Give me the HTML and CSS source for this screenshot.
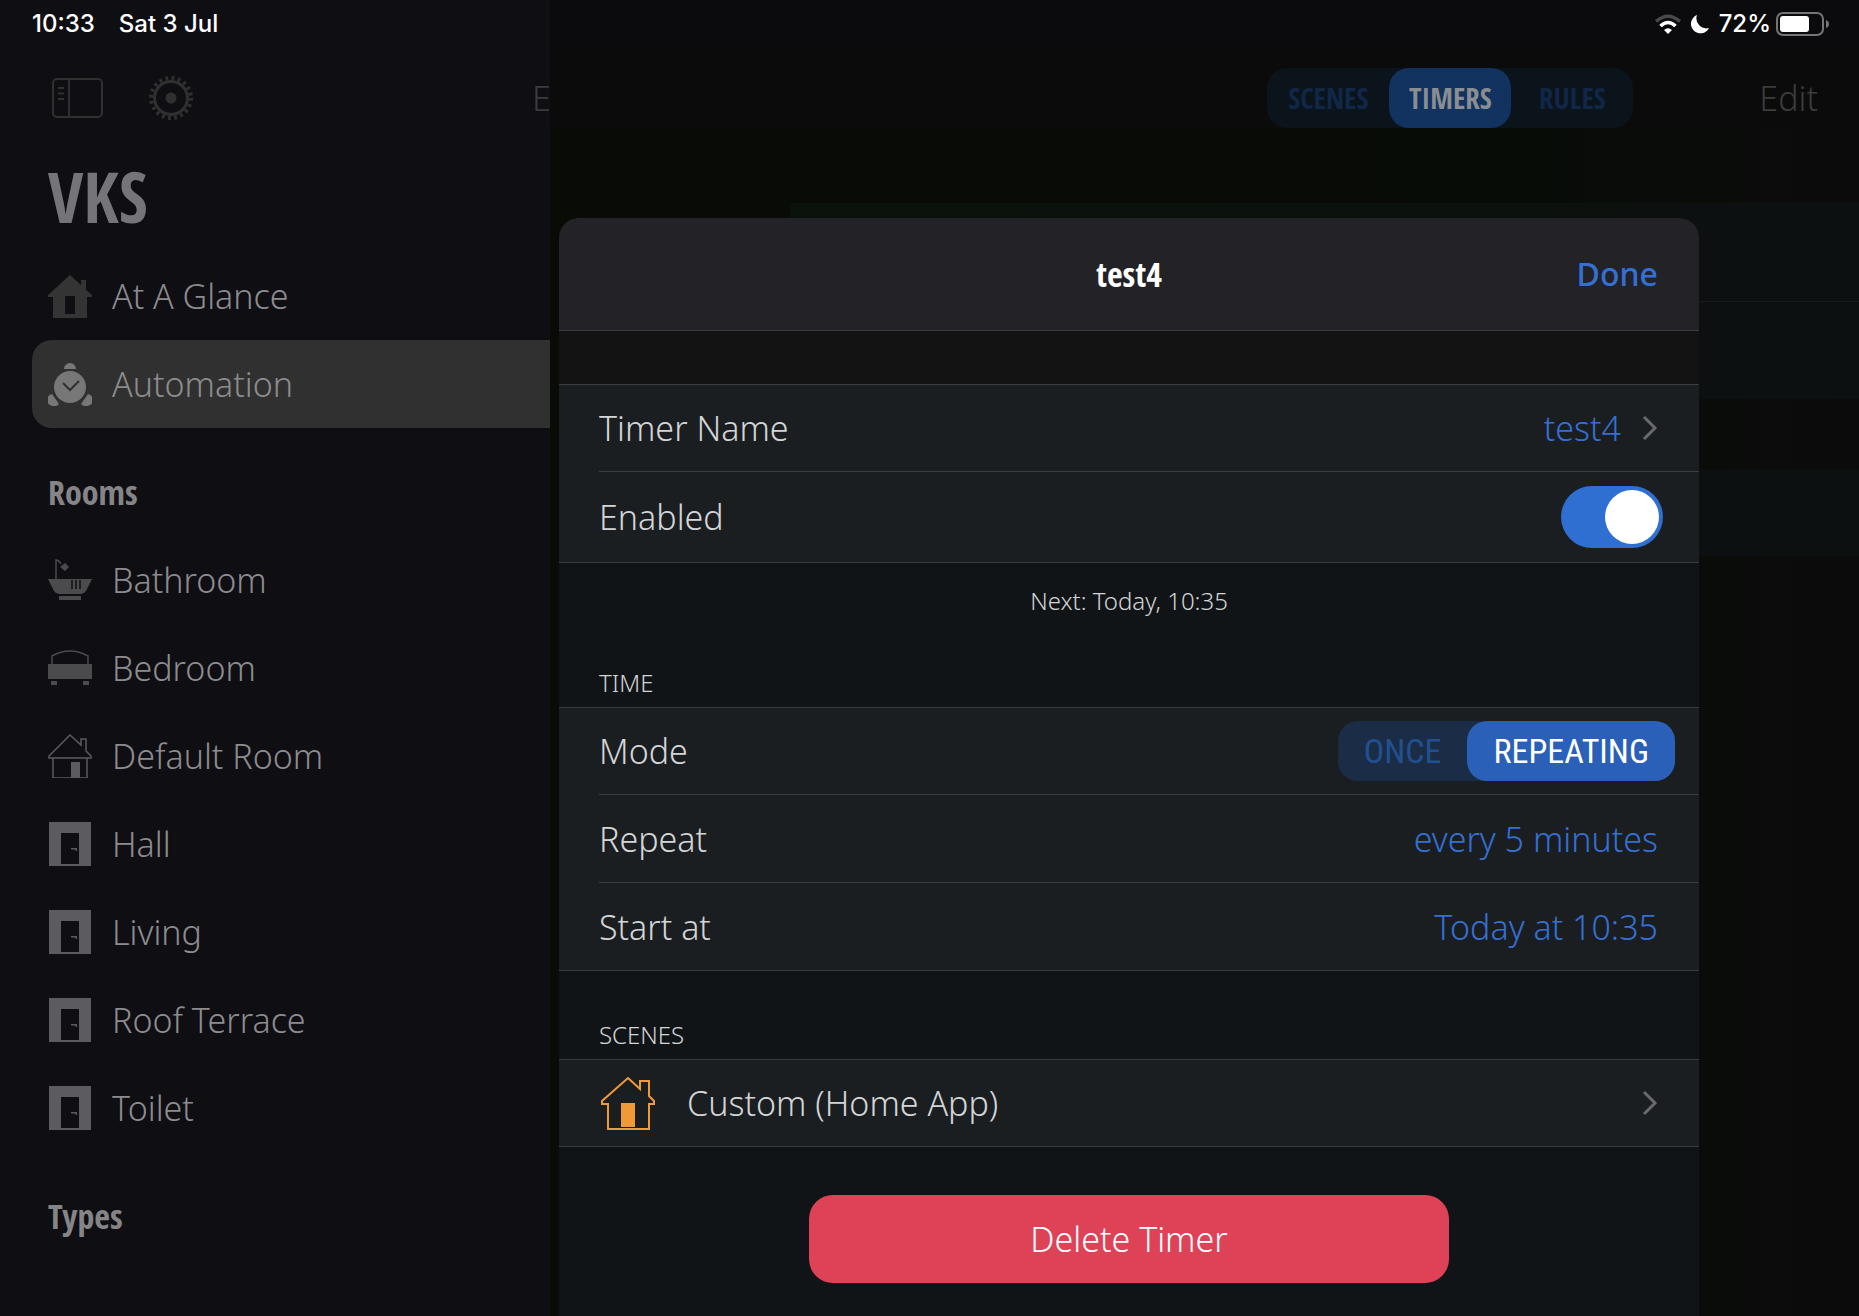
FILE: index.html
```html
<!DOCTYPE html>
<html lang="en">
<head>
<meta charset="utf-8">
<meta name="viewport" content="width=device-width, initial-scale=1">
<title>VKS – Timers</title>
<link rel="stylesheet" href="styles.css">
</head>
<body>
<svg class="defs" aria-hidden="true">
  <symbol id="door" viewBox="0 0 44 44"><path fill="currentColor" fill-rule="evenodd" d="M1 0H43V44H1ZM13 11V42H31V11Z"/><path fill="currentColor" d="M23 26h6v3h-1.500v-1.500H23z"/></symbol>
  <symbol id="chevron" viewBox="0 0 16 26"><path d="M2 2 13 13 2 24" fill="none" stroke="currentColor" stroke-width="3"/></symbol>
</svg>
<div class="app">
  <aside class="sidebar">
    <div class="status status-left"><span>10:33</span><span>Sat 3 Jul</span></div>
    <div class="side-tools">
      <button class="tool" aria-label="Toggle sidebar"><svg width="52" height="40" viewBox="0 0 52 40" fill="none" stroke="currentColor" stroke-width="2"><rect x="1" y="1" width="49" height="38" rx="4"/><path d="M17 1V39M6 10h6M6 15.500h6M6 21h6"/></svg></button>
      <button class="tool" aria-label="Settings"><svg width="46" height="46" viewBox="0 0 46 46" fill="none" stroke="currentColor"><circle cx="23" cy="23" r="16.500" stroke-width="3"/><circle cx="23" cy="23" r="20" stroke-width="4" stroke-dasharray="2.800 3.483"/><circle cx="23" cy="23" r="5.500" fill="currentColor" stroke="none"/></svg></button>
      <button class="tool edit side-edit">Edit</button>
    </div>
    <h1 class="title">VKS</h1>
    <nav>
      <a class="item dark" href="#glance"><svg class="icon" viewBox="0 0 44 44"><path fill="currentColor" fill-rule="evenodd" d="M22 1 33 11V6h5v10l6 5v2h-5V44H5V23H0v-2ZM17 22V40H27V22Z"/></svg>At A Glance</a>
      <a class="item selected" href="#automation" aria-current="page"><svg class="icon" viewBox="0 0 44 44"><g fill="currentColor"><circle cx="22" cy="25" r="16"/><path d="M16 7a6 6 0 0 1 12 0ZM4 32a6 6 0 0 0-2 11q5 3 9-1zM40 32a6 6 0 0 1 2 11q-5 3-9-1z"/></g><path d="m15 21 7 7 9-9" fill="none" stroke="#303030" stroke-width="2"/></svg>Automation</a>
      <h2 class="section">Rooms</h2>
      <a class="item bath" href="#bathroom"><svg class="icon" viewBox="0 0 44 44"><path d="M8 21V2q3 0 5 4" fill="none" stroke="currentColor" stroke-width="1.500"/><path fill="currentColor" d="m12 9 5-4 4 4-4 4zM0 21H44L38 33q-2 3-5 3H11q-3 0-5-3ZM11 38H33v4H11z"/><path d="M24 22v9M28 22v9M32 22v9" stroke="#0f0e13" stroke-width="1.500"/></svg>Bathroom</a>
      <a class="item bath" href="#bedroom"><svg class="icon" viewBox="0 0 44 44"><path d="M4 19V10Q22 0 40 10V19" fill="none" stroke="currentColor" stroke-width="1.500"/><path fill="currentColor" d="M0 18H44V33H0zM3 35h6v4H3zM35 35h6v4h-6z"/></svg>Bedroom</a>
      <a class="item" href="#default"><svg class="icon" viewBox="0 0 44 44"><g fill="none" stroke="currentColor" stroke-width="1.500"><path d="M22 1 33 11V5h5v12l5 5v2H1v-2ZM5 24V44H39V24"/></g><path fill="currentColor" d="M23 28h9v16h-9z"/></svg>Default Room</a>
      <a class="item" href="#hall"><svg class="icon"><use href="#door"/></svg>Hall</a>
      <a class="item" href="#living"><svg class="icon"><use href="#door"/></svg>Living</a>
      <a class="item" href="#roof"><svg class="icon"><use href="#door"/></svg>Roof Terrace</a>
      <a class="item" href="#toilet"><svg class="icon"><use href="#door"/></svg>Toilet</a>
      <h2 class="section">Types</h2>
    </nav>
  </aside>
  <main class="main">
    <div class="status status-right">
      <svg width="26" height="20" viewBox="0 0 26 20" fill="none" stroke="#fff" stroke-width="3.500"><path d="M1 7.500Q13-3 25 7.500" stroke="#48484a"/><path d="M5.500 12Q13 5 20.500 12"/><path d="m13 20-4-4q4-3.500 8 0z" fill="#fff" stroke="none"/></svg>
      <svg width="20" height="20" viewBox="0 0 20 20"><path fill="#fff" d="M7 1A9.500 9.500 0 1 0 19 14 10 10 0 0 1 7 1Z"/></svg>
      <span>72%</span>
      <svg width="54" height="24" viewBox="0 0 54 24"><rect x="1" y="1" width="46" height="22" rx="6" fill="none" stroke="#757575" stroke-width="2"/><rect x="4" y="4" width="29" height="16" rx="3" fill="#fff"/><path d="M50 8q3 1 3 4t-3 4z" fill="#757575"/></svg>
    </div>
    <div class="main-tools">
      <fieldset class="segments top-segments">
        <label><input type="radio" name="view"><span>SCENES</span></label>
        <label><input type="radio" name="view" checked><span>TIMERS</span></label>
        <label><input type="radio" name="view"><span>RULES</span></label>
      </fieldset>
      <button class="tool edit">Edit</button>
    </div>
    <div class="back-list"><div class="back-row tall"></div><div class="back-row tall"></div></div>
    <div class="back-list"><div class="back-row"></div></div>
  </main>
</div>
<div class="overlay">
  <section class="dialog" role="dialog" aria-labelledby="dialog-title">
    <header class="dialog-head"><h2 id="dialog-title">test4</h2><button class="done">Done</button></header>
    <div class="group first">
      <a class="row" href="#name"><span>Timer Name</span><span class="value">test4</span><svg class="chevron"><use href="#chevron"/></svg></a>
      <label class="row switch-row"><span>Enabled</span><input class="switch" type="checkbox" role="switch" checked></label>
    </div>
    <p class="note">Next: Today, 10:35</p>
    <h3 class="group-title">TIME</h3>
    <div class="group">
      <div class="row mode-row"><span>Mode</span>
        <fieldset class="segments mode-segments">
          <label><input type="radio" name="mode"><span>ONCE</span></label>
          <label><input type="radio" name="mode" checked><span>REPEATING</span></label>
        </fieldset>
      </div>
      <a class="row" href="#repeat"><span>Repeat</span><span class="value">every 5 minutes</span></a>
      <a class="row" href="#start"><span>Start at</span><span class="value">Today at 10:35</span></a>
    </div>
    <h3 class="group-title scenes-title">SCENES</h3>
    <div class="group">
      <a class="row scene-row" href="#scene"><svg class="scene-icon" viewBox="0 0 54 54"><path d="M27 2 39 13V5h9v15l5 5v3h-5V53H7V28H1v-3Z" fill="none" stroke="currentColor" stroke-width="2"/><path fill="currentColor" d="M20 27H34V51H20z"/></svg><span>Custom (Home App)</span><svg class="chevron"><use href="#chevron"/></svg></a>
    </div>
    <button class="delete">Delete Timer</button>
  </section>
</div>
</body>
</html>
```
FILE: styles.css
```css
*, *::before, *::after { box-sizing: border-box; }

body {
  margin: 0;
  background: #0b0b0c;
  color: #8a8a8c;
  font: 350 34px/44px "Noto Sans", "Open Sans", sans-serif;
  position: relative;
}

h1, h2, h3, p { margin: 0; }
a { color: inherit; text-decoration: none; }
button { font: inherit; border: 0; padding: 0; cursor: pointer; }
.defs { position: absolute; width: 0; height: 0; }

.app { display: flex; min-height: 100vh; }

/* Sidebar */
.sidebar {
  flex: 0 0 550px;
  overflow: hidden;
  background: #0f0e13;
  padding-left: 32px;
}

.status {
  display: flex;
  align-items: center;
  height: 48px;
  color: #fff;
  font: 500 24px/48px Inter, sans-serif;
}
.status-left { gap: 24px; }

.side-tools {
  display: flex;
  align-items: center;
  height: 100px;
  padding-left: 20px;
  gap: 44px;
}
.tool { display: flex; flex: none; background: none; color: #303030; }
.edit { color: #3c3c3e; }
.side-edit { margin-left: 294px; }

.title {
  padding: 16px 0 24px 16px;
  color: #75747a;
  font: bold 70px/64px "Open Sans Condensed", "Noto Sans Condensed", "Liberation Sans Narrow", sans-serif;
}

.item {
  display: flex;
  align-items: center;
  gap: 20px;
  height: 88px;
  padding-left: 16px;
  color: #8c8c8e;
}
.selected { background: #303030; border-radius: 20px 0 0 20px; }
.icon { flex: none; width: 44px; height: 44px; color: #5c5b60; }
.dark .icon { color: #343435; }
.bath .icon { color: #4b4b4d; }
.selected .icon { color: #777; }

.section {
  height: 108px;
  padding: 44px 0 0 16px;
  color: #858587;
  font: bold 34px/40px "Open Sans Condensed", "Noto Sans Condensed", "Liberation Sans Narrow", sans-serif;
}

/* Screen behind the dialog */
.main {
  flex: 1;
  min-width: 0;
  background: linear-gradient(90deg, #090b06 0, #080c07 75%, #0a0c0a 90%, #0c0b0c 100%);
}
.status-right {
  justify-content: flex-end;
  gap: 9px;
  padding-right: 29px;
  background: #0b0b0d;
}
.status-right svg { flex: none; }
.status-right span { margin-right: -4px; }

.main-tools {
  display: flex;
  align-items: center;
  justify-content: flex-end;
  gap: 126px;
  height: 80px;
  padding: 20px 41px 0 0;
  background: #0b0b0c;
  margin-bottom: 75px;
}

.segments {
  display: flex;
  height: 60px;
  margin: 0;
  padding: 0;
  border: 0;
  border-radius: 20px;
}
.segments label { display: flex; }
.segments input { appearance: none; width: 0; height: 0; margin: 0; }
.segments span {
  display: flex;
  align-items: center;
  justify-content: center;
  height: 60px;
  border-radius: 20px;
}
.top-segments {
  background: #0b141b;
  color: #102748;
  font: bold 29px/40px "Open Sans Condensed", "Noto Sans Condensed", "Liberation Sans Narrow", sans-serif;
}
.top-segments span { min-width: 122px; padding: 0 16px; }
.top-segments input:checked + span { background: #12325f; color: #898e92; }

.back-list { margin: 0 0 70px 240px; }
.back-row { height: 87px; background: linear-gradient(90deg, #0b110b 0, #0b110c 70%, #0c1010 85%, #0d1011 100%); }
.back-row.tall { height: 98px; }
.back-row + .back-row { border-top: 1px solid #171a1a; }

/* Dialog */
.overlay {
  position: absolute;
  inset: 0;
  padding: 218px 160px 0 559px;
}
.dialog {
  min-height: 100%;
  overflow: hidden;
  border-radius: 20px 20px 0 0;
  background: #111416;
  color: #d3d5d7;
}
.dialog-head {
  display: grid;
  grid-template-columns: 1fr auto 1fr;
  align-items: center;
  height: 113px;
  padding: 0 41px;
  background: #232226;
  border-bottom: 1px solid #3d3e41;
}
.dialog-head h2 {
  grid-column: 2;
  color: #fff;
  font: bold 34px/44px "Open Sans Condensed", "Noto Sans Condensed", "Liberation Sans Narrow", sans-serif;
}
.done { justify-self: end; background: none; color: #3470d4; font-size: 32px; font-weight: 500; }

.group { border: 1px solid #393c3f; border-width: 1px 0; background: #1b1e21; }
.first { box-shadow: 0 -53px #131313; margin-top: 53px; }
.row {
  display: flex;
  align-items: center;
  height: 88px;
  margin-left: 40px;
  padding-right: 41px;
}
.row:first-child { height: 86px; }
.row > span:first-of-type { margin-right: auto; }
.row + .row { border-top: 1px solid #393c3f; }
.value { color: #3470d4; }
.chevron { flex: none; width: 16px; height: 26px; color: #69696c; }
.value + .chevron { margin-left: 21px; }

.row.switch-row { height: 91px; padding-right: 36px; }
.switch {
  appearance: none;
  width: 102px;
  height: 62px;
  margin: 0;
  padding: 4px;
  border-radius: 31px;
  background: #2f6fd2;
  display: flex;
  justify-content: flex-end;
}
.switch::before { content: ""; width: 54px; height: 54px; border-radius: 50%; background: #fff; }
.switch:not(:checked) { background: #39393d; justify-content: flex-start; }

.note {
  padding: 22px 0 26px;
  font-size: 24px;
  line-height: 32px;
  text-align: center;
}
.group-title {
  padding: 24px 40px 8px;
  font-size: 24px;
  font-weight: 350;
  line-height: 32px;
}
.group-title.scenes-title { padding-top: 48px; }

.row.mode-row { padding-right: 24px; }
.mode-segments {
  background: #1b2d46;
  color: #21508f;
  font: 400 34px/44px "Noto Sans Condensed", "Noto Sans ExtraCondensed", "Roboto Condensed", "Liberation Sans Narrow", sans-serif;
}
.mode-segments span { padding: 0 26px; }
.mode-segments input:checked + span { background: #2a60b7; color: #fff; }

.scene-icon { flex: none; width: 54px; height: 54px; margin: 0 32px 0 2px; color: #f09a37; }

.delete {
  display: block;
  width: 640px;
  max-width: 90%;
  height: 88px;
  margin: 48px auto 33px;
  border-radius: 24px;
  background: #de4257;
  color: #fff;
}
```
